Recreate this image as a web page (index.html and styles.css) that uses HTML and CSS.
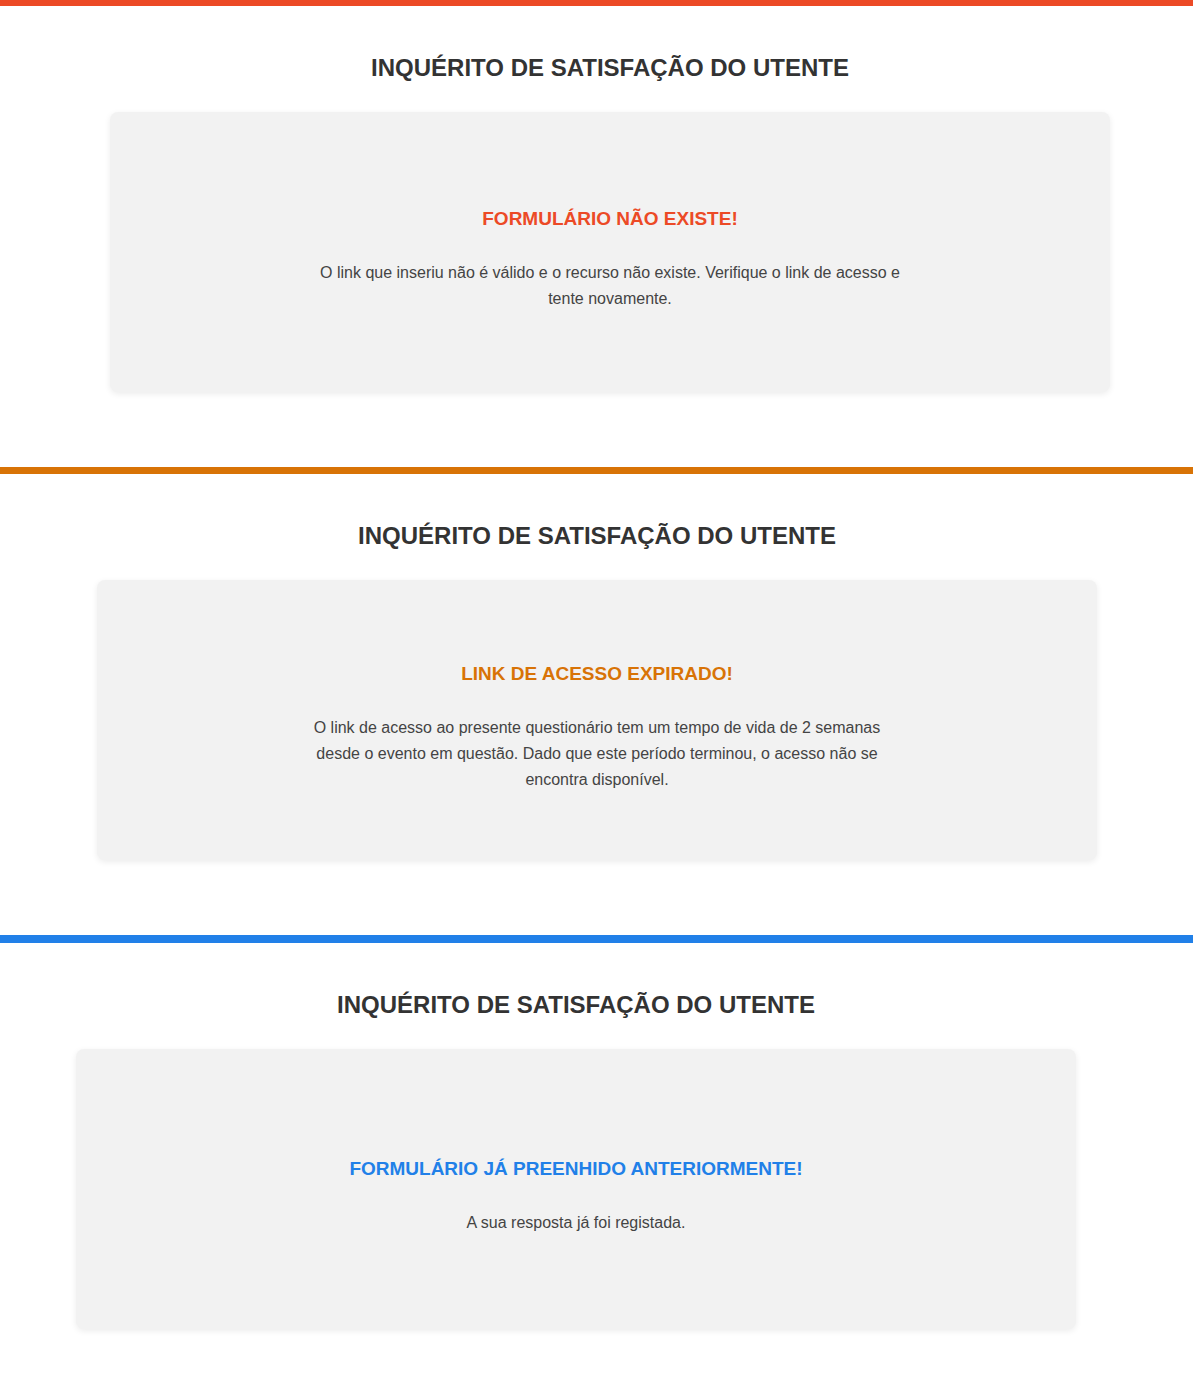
FILE: index.html
```html
<!DOCTYPE html>
<html lang="pt">
<head>
<meta charset="utf-8">
<title>Inquérito de Satisfação do Utente</title>
<link rel="stylesheet" href="styles.css">
</head>
<body>
  <section class="panel panel--red">
    <div class="panel__inner panel__inner--a">
      <h1 class="panel__title">INQUÉRITO DE SATISFAÇÃO DO UTENTE</h1>
      <div class="card">
        <h2 class="card__title">FORMULÁRIO NÃO EXISTE!</h2>
        <p class="card__text">O link que inseriu não é válido e o recurso não existe. Verifique o link de acesso e tente novamente.</p>
      </div>
    </div>
  </section>
  <section class="panel panel--orange">
    <div class="panel__inner panel__inner--b">
      <h1 class="panel__title">INQUÉRITO DE SATISFAÇÃO DO UTENTE</h1>
      <div class="card">
        <h2 class="card__title">LINK DE ACESSO EXPIRADO!</h2>
        <p class="card__text">O link de acesso ao presente questionário tem um tempo de vida de 2 semanas desde o evento em questão. Dado que este período terminou, o acesso não se encontra disponível.</p>
      </div>
    </div>
  </section>
  <section class="panel panel--blue">
    <div class="panel__inner panel__inner--c">
      <h1 class="panel__title">INQUÉRITO DE SATISFAÇÃO DO UTENTE</h1>
      <div class="card">
        <h2 class="card__title">FORMULÁRIO JÁ PREENHIDO ANTERIORMENTE!</h2>
        <p class="card__text">A sua resposta já foi registada.</p>
      </div>
    </div>
  </section>
</body>
</html>
```
FILE: styles.css
```css
* { box-sizing: border-box; }
html, body {
  margin: 0;
  padding: 0;
  background: #ffffff;
  font-family: "Liberation Sans", Arial, sans-serif;
  color: #333333;
}
.panel {
  height: 468px;
}
.panel--red { border-top: 6px solid #ec4a26; height: 467px; }
.panel--orange { border-top: 7px solid #d87306; }
.panel--blue { border-top: 8px solid #2180e8; }
.panel--red .card__title { color: #ec4a26; }
.panel--orange .card__title { color: #d87306; }
.panel--blue .card__title { color: #2180e8; }

.panel__inner {
  width: 1000px;
  display: flex;
  flex-direction: column;
  align-items: center;
}
.panel__inner--a { margin-left: 110px; }
.panel__inner--b { margin-left: 97px; }
.panel__inner--c { margin-left: 76px; }

.panel__title {
  margin: 48px 0 0;
  height: 28px;
  line-height: 28px;
  font-size: 24px;
  font-weight: bold;
  color: #333333;
  text-align: center;
}
.card {
  margin-top: 30px;
  width: 1000px;
  height: 280px;
  background: #f2f2f2;
  border-radius: 8px;
  box-shadow: 0 2px 6px rgba(0, 0, 0, 0.08);
  display: flex;
  flex-direction: column;
  align-items: center;
  justify-content: center;
  padding-top: 15px;
}
.card__title {
  margin: 0;
  font-size: 19px;
  line-height: 24px;
  font-weight: bold;
  text-align: center;
}
.card__text {
  margin: 29px 0 0;
  max-width: 600px;
  font-size: 16px;
  line-height: 26px;
  color: #444444;
  text-align: center;
}
```
